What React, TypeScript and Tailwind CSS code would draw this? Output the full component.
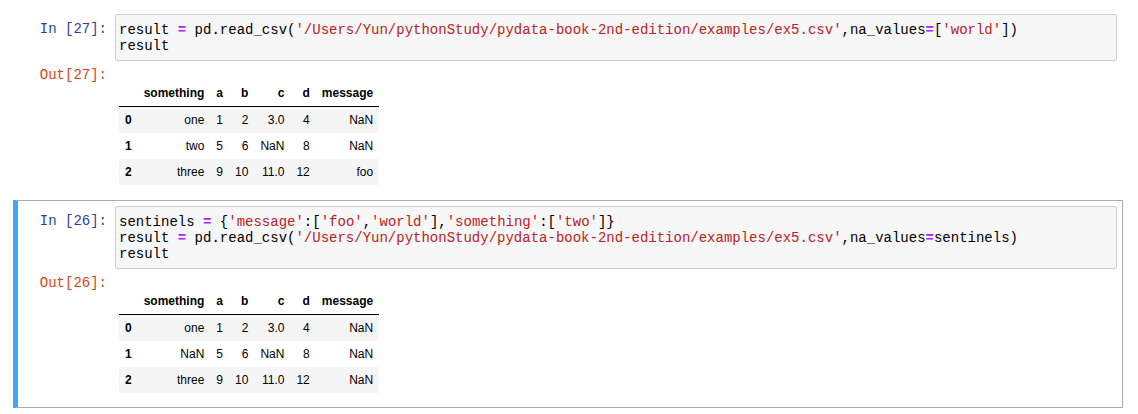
import type { ReactNode } from "react";

type Tok = [string, "op" | "str" | "txt"];

const path = "'/Users/Yun/pythonStudy/pydata-book-2nd-edition/examples/ex5.csv'";

const cell1: Tok[][] = [
  [
    ["result ", "txt"],
    ["=", "op"],
    [" pd.read_csv(", "txt"],
    [path, "str"],
    [",na_values", "txt"],
    ["=", "op"],
    ["[", "txt"],
    ["'world'", "str"],
    ["])", "txt"],
  ],
  [["result", "txt"]],
];

const cell2: Tok[][] = [
  [
    ["sentinels ", "txt"],
    ["=", "op"],
    [" {", "txt"],
    ["'message'", "str"],
    [":[", "txt"],
    ["'foo'", "str"],
    [",", "txt"],
    ["'world'", "str"],
    ["],", "txt"],
    ["'something'", "str"],
    [":[", "txt"],
    ["'two'", "str"],
    ["]}", "txt"],
  ],
  [
    ["result ", "txt"],
    ["=", "op"],
    [" pd.read_csv(", "txt"],
    [path, "str"],
    [",na_values", "txt"],
    ["=", "op"],
    ["sentinels)", "txt"],
  ],
  [["result", "txt"]],
];

const rows1 = [
  ["0", "one", "1", "2", "3.0", "4", "NaN"],
  ["1", "two", "5", "6", "NaN", "8", "NaN"],
  ["2", "three", "9", "10", "11.0", "12", "foo"],
];

const rows2 = [
  ["0", "one", "1", "2", "3.0", "4", "NaN"],
  ["1", "NaN", "5", "6", "NaN", "8", "NaN"],
  ["2", "three", "9", "10", "11.0", "12", "NaN"],
];

const mono = "font-['Liberation_Mono','DejaVu_Sans_Mono',monospace] text-[14px]";

function Code({ lines }: { lines: Tok[][] }) {
  return (
    <div className="flex-1 rounded-[2px] border border-[#cfcfcf] bg-[#f7f7f7] pt-[7px] pb-[6px] pl-[3px]">
      {lines.map((line, i) => (
        <div key={i} className={`${mono} whitespace-pre leading-[16px] text-black`}>
          {line.map(([t, k], j) =>
            k === "op" ? (
              <span key={j} className="font-bold text-[#AA22FF]">{t}</span>
            ) : k === "str" ? (
              <span key={j} className="text-[#BA2121]">{t}</span>
            ) : (
              <span key={j}>{t}</span>
            ),
          )}
        </div>
      ))}
    </div>
  );
}

function Frame({ rows }: { rows: string[][] }) {
  const head = ["", "something", "a", "b", "c", "d", "message"];
  return (
    <table className="border-collapse font-['Liberation_Sans',Arial,sans-serif] text-[12px] leading-[14px] text-black">
      <thead>
        <tr className="border-b border-black">
          {head.map((h, i) => (
            <th key={i} className="px-[6px] py-[6px] text-right font-bold">
              {h}
            </th>
          ))}
        </tr>
      </thead>
      <tbody>
        {rows.map((r, i) => (
          <tr key={i} className={i % 2 === 0 ? "bg-[#f5f5f5]" : "bg-white"}>
            {r.map((v, j) =>
              j === 0 ? (
                <th key={j} className="px-[6px] py-[6px] text-left font-bold">
                  {v}
                </th>
              ) : (
                <td key={j} className="px-[6px] py-[6px] text-right">
                  {v}
                </td>
              ),
            )}
          </tr>
        ))}
      </tbody>
    </table>
  );
}

function Cell({
  n,
  lines,
  rows,
  selected,
}: {
  n: number;
  lines: Tok[][];
  rows: string[][];
  selected?: boolean;
}): ReactNode {
  return (
    <div
      className={`border border-l-[5px] p-[5px] ${
        selected ? "border-[#ababab] border-l-[#42A5F5]" : "border-transparent"
      }`}
    >
      <div className="flex">
        <div className={`${mono} w-[92px] shrink-0 pt-[7px] pr-[8px] text-right leading-[16px] text-[#303F9F]`}>
          In [{n}]:
        </div>
        <Code lines={lines} />
      </div>
      <div className="flex">
        <div className={`${mono} w-[92px] shrink-0 pt-[6px] pr-[8px] text-right leading-[17px] text-[#D84315]`}>
          Out[{n}]:
        </div>
        <div className="pt-[19px] pb-[9px] pl-[4px]">
          <Frame rows={rows} />
        </div>
      </div>
    </div>
  );
}

export default function App() {
  return (
    <div className="min-h-[414px] w-[1138px] bg-white pt-[8px] pl-[13px]">
      <div className="w-[1110px]">
        <Cell n={27} lines={cell1} rows={rows1} />
        <Cell n={26} lines={cell2} rows={rows2} selected />
      </div>
    </div>
  );
}
